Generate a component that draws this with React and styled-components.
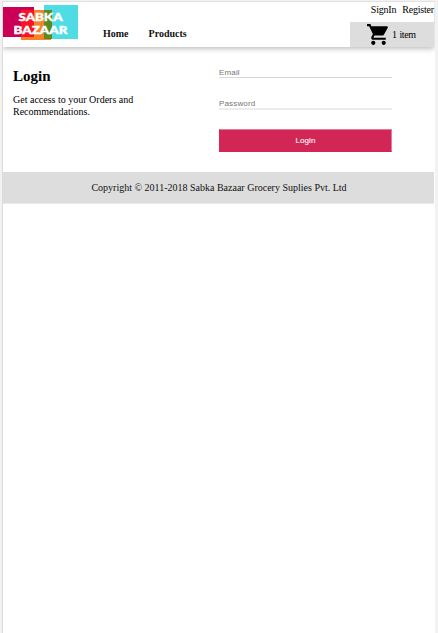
import React from "react";
import styled, { createGlobalStyle } from "styled-components";

const Global = createGlobalStyle`
  * { box-sizing: border-box; }
  body { margin: 0; background: #f2f2f2; font-family: "Liberation Serif", "Times New Roman", serif; color: #000; overflow: hidden; }
  h1, p { margin: 0; }
`;
const Page = styled.div`
  width: 433px; height: 632px; margin: 1px 0 0 2px; padding-right: 1px;
  border-left: 1px solid #dcdcdc; border-top: 1px solid #e2e2e2;
  background: #fff;
`;
const Header = styled.header`
  display: flex; height: 45px; background: #fff;
  box-shadow: 0 2px 5px rgba(0, 0, 0, 0.25);
  clip-path: inset(0 -1px -10px 0);
`;
const Logo = styled.svg`
  width: 75px; height: 36px; margin-top: 3px; flex: none;
`;
const LogoText = styled.text`
  fill: #fff; stroke: #fff; stroke-width: 0.4px;
  font-family: Lato, sans-serif; font-weight: 900; font-size: 11px;
  text-rendering: geometricPrecision;
`;
const Nav = styled.nav`
  display: flex; gap: 20px; padding: 26px 0 0 25px; flex: 1;
`;
const NavLink = styled.a`
  font-size: 10px; line-height: 12px; font-weight: 700; color: #111;
`;
const Account = styled.div`
  width: 84px; display: flex; flex-direction: column;
`;
const AccountLinks = styled.div`
  display: flex; justify-content: flex-end; gap: 6px; height: 20px; padding-top: 2px;
  font-size: 10px; line-height: 12px; letter-spacing: -0.2px;
`;
const Cart = styled.button`
  display: flex; align-items: center; gap: 1px; height: 25px; border: 0; padding: 0 0 0 16px;
  background: #ddd; font: 10px/12px "Liberation Serif", serif; letter-spacing: -0.35px; word-spacing: 0.6px; color: #000;
`;
const CartIcon = styled.svg`
  width: 25px; height: 25px; flex: none;
`;
const Main = styled.main`
  display: flex; height: 125px; padding: 20px 10px 0;
`;
const Intro = styled.section`
  width: 206px;
`;
const Title = styled.h1`
  font-size: 15px; line-height: 16px; margin-top: 1px;
`;
const Lead = styled.p`
  width: 150px; font-size: 10px; line-height: 12px; margin-top: 10px;
`;
const Form = styled.form`
  width: 173px; display: flex; flex-direction: column;
`;
const Field = styled.input`
  height: ${(p) => (p.$thick ? 12 : 11)}px; margin: ${(p) => p.$top || 0}px 0 0; padding: 0; border: 0; border-radius: 0;
  border-bottom: ${(p) => (p.$thick ? "2px solid #ececec" : "1px solid #d8d8d8")};
  font: 8px/10px "Liberation Sans", Arial, sans-serif; letter-spacing: 0.15px; outline: 0; background: transparent;
  &::placeholder { color: #757575; opacity: 1; }
`;
const Submit = styled.button`
  height: 23px; margin: 19px 0 0; padding: 0; border: 1px solid #d22656;
  border-top-color: #e77b9a; border-right-color: #e77b9a;
  background: #d22656; color: #fff; font: 8px/10px "Liberation Sans", Arial, sans-serif;
  letter-spacing: 0.1px; -webkit-text-stroke: 0.1px #fff;
`;
const Footer = styled.footer`
  height: 32px; padding: 10px 0 0 1px; border-bottom: 1px solid #eaeaea; background: #ddd;
  text-align: center; font-size: 10px; line-height: 12px; color: #111;
`;

export default function App() {
  return (
    <>
      <Global />
      <Page>
        <Header>
          <Logo viewBox="0 0 75 36" role="img" aria-label="Sabka Bazaar">
            <rect x="0" y="2" width="31" height="30" fill="#cb0055" />
            <rect x="18" y="5" width="30" height="30" fill="#f5832a" />
            <rect x="18" y="5" width="13" height="27" fill="#f5142a" />
            <rect x="41" y="0" width="34" height="34" fill="#50dce4" />
            <rect x="41" y="5" width="8" height="29" fill="#598b23" />
            <LogoText x="15.5" y="16.4" textLength="44" lengthAdjust="spacingAndGlyphs">SABKA</LogoText>
            <LogoText x="10.5" y="28.6" textLength="54" lengthAdjust="spacingAndGlyphs">BAZAAR</LogoText>
          </Logo>
          <Nav>
            <NavLink>Home</NavLink>
            <NavLink>Products</NavLink>
          </Nav>
          <Account>
            <AccountLinks><span>SignIn</span><span>Register</span></AccountLinks>
            <Cart>
              <CartIcon viewBox="0 0 24 24">
                <path d="M7 18c-1.1 0-1.99.9-1.99 2S5.9 22 7 22s2-.9 2-2-.9-2-2-2zM1 2v2h2l3.6 7.59-1.35 2.45c-.16.28-.25.61-.25.96 0 1.1.9 2 2 2h12v-2H7.42c-.14 0-.25-.11-.25-.25l.03-.12.9-1.63h7.45c.75 0 1.41-.41 1.75-1.03l3.58-6.49A1 1 0 0 0 20 4H5.21l-.94-2H1zm16 16c-1.1 0-1.99.9-1.99 2s.89 2 1.99 2 2-.9 2-2-.9-2-2-2z" />
              </CartIcon>
              1 item
            </Cart>
          </Account>
        </Header>
        <Main>
          <Intro>
            <Title>Login</Title>
            <Lead>Get access to your Orders and Recommendations.</Lead>
          </Intro>
          <Form>
            <Field placeholder="Email" />
            <Field type="password" placeholder="Password" $thick $top={20} />
            <Submit type="button">Login</Submit>
          </Form>
        </Main>
        <Footer>Copyright © 2011-2018 Sabka Bazaar Grocery Suplies Pvt. Ltd</Footer>
      </Page>
    </>
  );
}
